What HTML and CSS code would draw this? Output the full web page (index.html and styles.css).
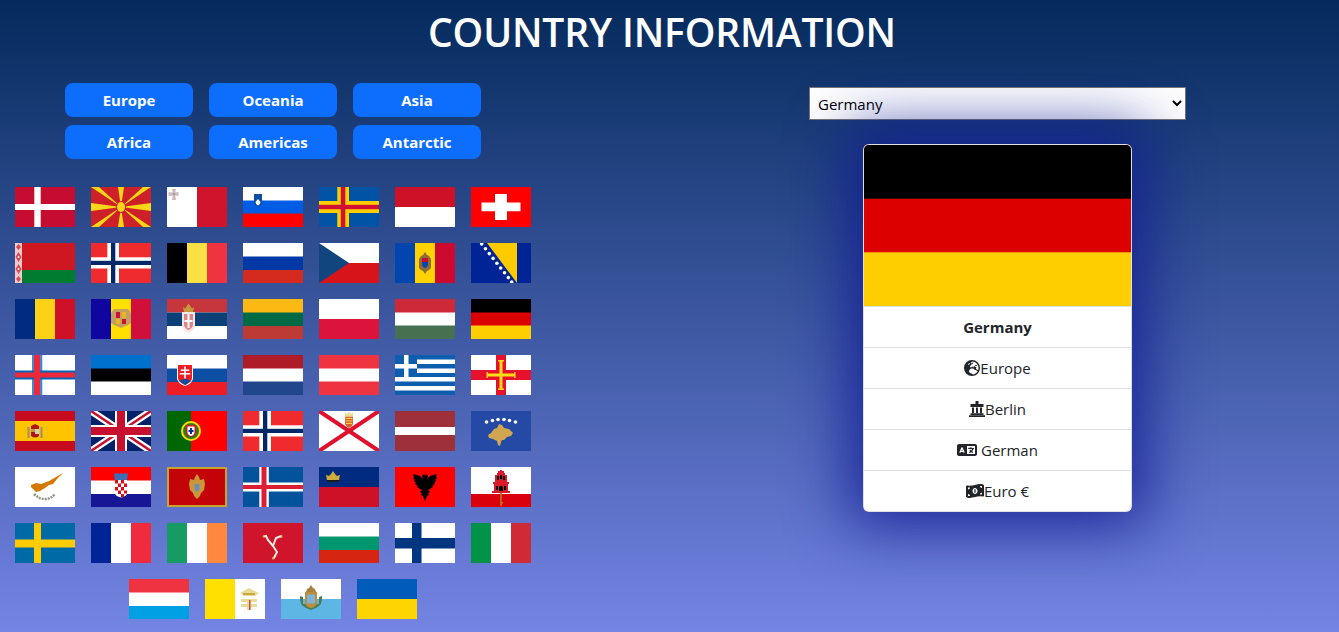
FILE: index.html
```html
<!DOCTYPE html>
<html lang="en">
<head>
    <meta charset="UTF-8">
    <meta name="viewport" content="width=device-width, initial-scale=1.0">
    <title>Country Information</title>
    <link rel="stylesheet" href="styles.css">
</head>
<body>
    <h1 class="title">COUNTRY INFORMATION</h1>
    <main class="layout">
        <section class="browse">
            <div class="regions">
                <button class="region-btn">Europe</button>
                <button class="region-btn">Oceania</button>
                <button class="region-btn">Asia</button>
                <button class="region-btn">Africa</button>
                <button class="region-btn">Americas</button>
                <button class="region-btn">Antarctic</button>
            </div>
            <div class="flags">
                <!-- row 1 -->
                <svg class="flag" viewBox="0 0 60 40"><title>Denmark</title><rect width="60" height="40" fill="#c60c30"/><rect x="19.3" width="6.4" height="40" fill="#fff"/><rect y="17" width="60" height="6" fill="#fff"/></svg>
                <svg class="flag" viewBox="0 0 60 40"><title>North Macedonia</title><rect width="60" height="40" fill="#ce2028"/><g fill="#f9d616"><path d="M0 0h8l22 20zM60 0h-8L30 20zM0 40h8l22-20zM60 40h-8L30 20zM27 0h6l-3 20zM27 40h6l-3-20zM0 16v8l30-4zM60 16v8l-30-4z"/></g><ellipse cx="30" cy="20" rx="5" ry="6" fill="#ce2028"/><ellipse cx="30" cy="20" rx="4" ry="5" fill="#f9d616"/></svg>
                <svg class="flag" viewBox="0 0 60 40"><title>Malta</title><rect width="60" height="40" fill="#cf142b"/><rect width="30" height="40" fill="#fff"/><path d="M5 2h4l-.8 3.500L11.500 5v4l-3.300-.5L9 13H5l.8-4.500L1.500 9V5l4.300.5z" fill="#cdb9bb"/><rect x="6" y="6" width="2" height="2" fill="#999"/></svg>
                <svg class="flag" viewBox="0 0 60 40"><title>Slovenia</title><rect width="60" height="40" fill="#f00"/><rect width="60" height="26.500" fill="#005ce5"/><rect width="60" height="13.500" fill="#fff"/><path d="M11 7h8v8q0 3-4 5q-4-2-4-5z" fill="#0b4ea2"/><path d="M12.500 15l2.500-3 2.500 3q0 2-2.500 3.500q-2.500-1.500-2.500-3.500z" fill="#fff"/></svg>
                <svg class="flag" viewBox="0 0 60 40"><title>Aland</title><rect width="60" height="40" fill="#0053a5"/><rect x="18.300" width="11.700" height="40" fill="#ffce00"/><rect y="14" width="60" height="12" fill="#ffce00"/><rect x="21.800" width="4.500" height="40" fill="#d21034"/><rect y="17.800" width="60" height="4.400" fill="#d21034"/></svg>
                <svg class="flag" viewBox="0 0 60 40"><title>Monaco</title><rect width="60" height="40" fill="#fff"/><rect width="60" height="20" fill="#ce1126"/></svg>
                <svg class="flag" viewBox="0 0 60 40"><title>Switzerland</title><rect width="60" height="40" fill="#f00"/><path d="M24 7h12v8.500h13.500v8.800H36V33H24v-8.700H10.500v-8.800H24z" fill="#fff"/></svg>

                <!-- row 2 -->
                <svg class="flag" viewBox="0 0 60 40"><title>Belarus</title><rect width="60" height="27" fill="#ce1720"/><rect y="27" width="60" height="13" fill="#007c30"/><rect width="7" height="40" fill="#f3c9cc"/><path d="M3.500 1L6 4 3.500 7 1 4zM3.500 9L6.500 14 3.500 19 .5 14zM3.500 21L6.500 26 3.500 31 .5 26zM3.500 33L6 36 3.500 39 1 36z" fill="#d64a52"/><circle cx="3.500" cy="14" r="1" fill="#fff"/><circle cx="3.500" cy="26" r="1" fill="#fff"/></svg>
                <svg class="flag" viewBox="0 0 60 40"><title>Norway</title><rect width="60" height="40" fill="#ef2b2d"/><rect x="16.300" width="11.700" height="40" fill="#fff"/><rect y="14.300" width="60" height="11.200" fill="#fff"/><rect x="20" width="4.300" height="40" fill="#002868"/><rect y="17.800" width="60" height="4.200" fill="#002868"/></svg>
                <svg class="flag" viewBox="0 0 60 40"><title>Belgium</title><rect width="60" height="40" fill="#ef3340"/><rect width="40" height="40" fill="#fae042"/><rect width="20" height="40"/></svg>
                <svg class="flag" viewBox="0 0 60 40"><title>Russia</title><rect width="60" height="40" fill="#d52b1e"/><rect width="60" height="27" fill="#0039a6"/><rect width="60" height="13.500" fill="#fff"/></svg>
                <svg class="flag" viewBox="0 0 60 40"><title>Czechia</title><rect width="60" height="40" fill="#fff"/><rect y="20" width="60" height="20" fill="#d7141a"/><path d="M0 0l30 20L0 40z" fill="#11457e"/></svg>
                <svg class="flag" viewBox="0 0 60 40"><title>Moldova</title><rect width="60" height="40" fill="#cc092f"/><rect width="40" height="40" fill="#ffd200"/><rect width="20" height="40" fill="#0046ae"/><path d="M30 9l2 3 2 1 2 3v9l-2 2-2 1-2 3-2-3-2-1-2-2v-9l2-3 2-1z" fill="#8a6d3b"/><rect x="27" y="15" width="6" height="4" fill="#cc092f"/><path d="M27 19h6v3q-1 3-3 3t-3-3z" fill="#0046ae"/></svg>
                <svg class="flag" viewBox="0 0 60 40"><title>Bosnia and Herzegovina</title><rect width="60" height="40" fill="#002395"/><path d="M16 0h30v40z" fill="#fecb00"/><g fill="#fff"><circle cx="10.700" cy="1" r="1.800"/><circle cx="14.500" cy="5.800" r="1.800"/><circle cx="18.300" cy="10.600" r="1.800"/><circle cx="22.100" cy="15.400" r="1.800"/><circle cx="25.900" cy="20.200" r="1.800"/><circle cx="29.700" cy="25" r="1.800"/><circle cx="33.500" cy="29.800" r="1.800"/><circle cx="37.300" cy="34.600" r="1.800"/><circle cx="40.700" cy="39" r="1.800"/></g></svg>

                <!-- row 3 -->
                <svg class="flag" viewBox="0 0 60 40"><title>Romania</title><rect width="60" height="40" fill="#ce1126"/><rect width="40" height="40" fill="#fcd116"/><rect width="20" height="40" fill="#002b7f"/></svg>
                <svg class="flag" viewBox="0 0 60 40"><title>Andorra</title><rect width="60" height="40" fill="#d0103a"/><rect width="40" height="40" fill="#fedf00"/><rect width="20" height="40" fill="#10069f"/><path d="M23 10h14l3 4v10l-3 2-7 3-7-3-3-2V14z" fill="#c4a060"/><rect x="25" y="13" width="4" height="6" fill="#d0103a"/><rect x="31" y="13" width="4" height="6" fill="#e8b820"/><rect x="25" y="20" width="4" height="5" fill="#e8b820"/><rect x="31" y="20" width="4" height="5" fill="#d0103a"/></svg>
                <svg class="flag" viewBox="0 0 60 40"><title>Serbia</title><rect width="60" height="40" fill="#fff"/><rect width="60" height="13.500" fill="#c6363c"/><rect y="13.500" width="60" height="13.500" fill="#0c4076"/><path d="M15 13h13v13q0 5-6.500 8q-6.500-3-6.500-8z" fill="#f2e6e6"/><path d="M17 15h9v10q0 4-4.500 6q-4.500-2-4.500-6z" fill="#c6363c" opacity=".55"/><path d="M20.500 15h2v6h3v2h-3v6h-2v-6h-3v-2h3z" fill="#fff"/><path d="M16 8l2 1.500 3.500-5 3.500 5 2-1.500-1 5H17z" fill="#c7983a"/></svg>
                <svg class="flag" viewBox="0 0 60 40"><title>Lithuania</title><rect width="60" height="40" fill="#be3a34"/><rect width="60" height="27" fill="#006a44"/><rect width="60" height="13.500" fill="#fdb913"/></svg>
                <svg class="flag" viewBox="0 0 60 40"><title>Poland</title><rect width="60" height="40" fill="#dc143c"/><rect width="60" height="20" fill="#fff"/></svg>
                <svg class="flag" viewBox="0 0 60 40"><title>Hungary</title><rect width="60" height="40" fill="#477050"/><rect width="60" height="26.500" fill="#fff"/><rect width="60" height="13.500" fill="#ce2939"/></svg>
                <svg class="flag" viewBox="0 0 60 40"><title>Germany</title><rect width="60" height="40" fill="#ffce00"/><rect width="60" height="26.500" fill="#d00"/><rect width="60" height="13.500"/></svg>

                <!-- row 4 -->
                <svg class="flag" viewBox="0 0 60 40"><title>Faroe Islands</title><rect width="60" height="40" fill="#fff"/><rect x="17" width="10.300" height="40" fill="#3f8ad0"/><rect y="15.500" width="60" height="9" fill="#0065bd"/><rect x="19" width="6" height="40" fill="#ed2939"/><rect y="17.500" width="60" height="5" fill="#ed2939"/></svg>
                <svg class="flag" viewBox="0 0 60 40"><title>Estonia</title><rect width="60" height="40" fill="#fff"/><rect width="60" height="26.500"/><rect width="60" height="13.500" fill="#0072ce"/></svg>
                <svg class="flag" viewBox="0 0 60 40"><title>Slovakia</title><rect width="60" height="40" fill="#ee1c25"/><rect width="60" height="27" fill="#0b4ea2"/><rect width="60" height="13.500" fill="#fff"/><path d="M10 9h16v14q0 5-8 8q-8-3-8-8z" fill="#fff"/><path d="M11 10h14v13q0 4-7 7q-7-3-7-7z" fill="#ee1c25"/><path d="M17.200 11.500h1.600v3h3.500v1.500h-3.500v2h4.500v1.500h-4.500v4h-1.600v-4h-4.500V18h4.500v-2h-3.500v-1.500h3.500z" fill="#fff"/><path d="M12.500 26q5.500-4 11 0q-2.500 2.500-5.500 4q-3-1.500-5.500-4z" fill="#0b4ea2"/></svg>
                <svg class="flag" viewBox="0 0 60 40"><title>Netherlands</title><rect width="60" height="40" fill="#21468b"/><rect width="60" height="26.500" fill="#fff"/><rect width="60" height="13.500" fill="#ae1c28"/></svg>
                <svg class="flag" viewBox="0 0 60 40"><title>Austria</title><rect width="60" height="40" fill="#ef3340"/><rect y="13.500" width="60" height="13" fill="#fff"/></svg>
                <svg class="flag" viewBox="0 0 60 40"><title>Greece</title><rect width="60" height="40" fill="#0d5eaf"/><g fill="#fff"><rect y="4.500" width="60" height="4.500"/><rect y="13.500" width="60" height="4.500"/><rect y="22" width="60" height="4.500"/><rect y="31" width="60" height="4.500"/></g><rect width="22" height="22" fill="#0d5eaf"/><rect x="9" width="4.500" height="22" fill="#fff"/><rect y="9" width="22" height="4.500" fill="#fff"/></svg>
                <svg class="flag" viewBox="0 0 60 40"><title>Guernsey</title><rect width="60" height="40" fill="#fff"/><rect x="25" width="10" height="40" fill="#e8112d"/><rect y="15" width="60" height="10" fill="#e8112d"/><path d="M27 5h6v1.500h-1.500v12H43V17h1.500v6H43v-1.500H31.500v12H33V35h-6v-1.500h1.500v-12H17V23h-1.500v-6H17v1.500h11.500v-12H27z" fill="#f9dd16"/></svg>

                <!-- row 5 -->
                <svg class="flag" viewBox="0 0 60 40"><title>Spain</title><rect width="60" height="40" fill="#c60b1e"/><rect y="10" width="60" height="20" fill="#ffc400"/><path d="M16 15l4-2 4 2v10q-4 3-8 0z" fill="#ad1519"/><rect x="20" y="18" width="4" height="5" fill="#d3cfc5"/><rect x="16" y="18" width="4" height="3" fill="#c8973c"/><rect x="12.500" y="16" width="2" height="11" fill="#a68a6d"/><rect x="25.500" y="16" width="2" height="11" fill="#a68a6d"/></svg>
                <svg class="flag" viewBox="0 0 60 40"><title>United Kingdom</title><rect width="60" height="40" fill="#012169"/><path d="M0 0l60 40M60 0L0 40" stroke="#fff" stroke-width="7"/><path d="M0 0l60 40M60 0L0 40" stroke="#c8102e" stroke-width="2.500"/><rect x="24" width="12" height="40" fill="#fff"/><rect y="14" width="60" height="12" fill="#fff"/><rect x="26" width="8" height="40" fill="#c8102e"/><rect y="16" width="60" height="8" fill="#c8102e"/></svg>
                <svg class="flag" viewBox="0 0 60 40"><title>Portugal</title><rect width="60" height="40" fill="#f00"/><rect width="24" height="40" fill="#060"/><circle cx="24" cy="20" r="9" fill="#2f7a1e" stroke="#ffe000" stroke-width="2"/><path d="M19 14h10v7q0 4-5 5q-5-1-5-5z" fill="#d01c1f"/><path d="M20.500 15.500h7v5.500q0 3-3.500 4q-3.500-1-3.500-4z" fill="#fff"/><rect x="23" y="17" width="2" height="6" fill="#039"/><rect x="21.500" y="19" width="5" height="2" fill="#039"/></svg>
                <svg class="flag" viewBox="0 0 60 40"><title>Svalbard and Jan Mayen</title><rect width="60" height="40" fill="#ef2b2d"/><rect x="16.300" width="11.700" height="40" fill="#fff"/><rect y="14.300" width="60" height="11.200" fill="#fff"/><rect x="20" width="4.300" height="40" fill="#002868"/><rect y="17.800" width="60" height="4.200" fill="#002868"/></svg>
                <svg class="flag" viewBox="0 0 60 40"><title>Jersey</title><rect width="60" height="40" fill="#fff"/><path d="M0 0l60 40M60 0L0 40" stroke="#df112d" stroke-width="4"/><path d="M26 5.500h8v6.500q0 3-4 5q-4-2-4-5z" fill="#e0602c"/><path d="M26.500 7.500h7M26.500 10h7M27 12.500h6" stroke="#f0d24c"/><path d="M26 1.500l2 1.500 2-2 2 2 2-1.500v4h-8z" fill="#f0d88c"/></svg>
                <svg class="flag" viewBox="0 0 60 40"><title>Latvia</title><rect width="60" height="40" fill="#9e3039"/><rect y="16" width="60" height="8" fill="#fff"/></svg>
                <svg class="flag" viewBox="0 0 60 40"><title>Kosovo</title><rect width="60" height="40" fill="#244aa5"/><path d="M28 13l3 1 2 3 5 1 4 4-2 3-4 1-3 3-2 0-1 2-1 4-2-1-1-4-4-2-4-1-1-3 3-2 3-4 3-1z" fill="#d0a650"/><g fill="#fff"><circle cx="15.500" cy="11" r="1.800"/><circle cx="21.500" cy="9.500" r="1.800"/><circle cx="27" cy="8.500" r="1.800"/><circle cx="33" cy="8.500" r="1.800"/><circle cx="38.500" cy="9.500" r="1.800"/><circle cx="44.500" cy="11" r="1.800"/></g></svg>

                <!-- row 6 -->
                <svg class="flag" viewBox="0 0 60 40"><title>Cyprus</title><rect width="60" height="40" fill="#fff"/><path d="M16 18l5-2 5 1 8-3 7-4 7-4-6 6-4 5-4 1-4 3-5 3-4 1-3-3-2-2z" fill="#d57800"/><path d="M19 27q5 5 11 5 6 0 10-5" fill="none" stroke="#8b9a80" stroke-width="2.500" stroke-dasharray="2 1"/></svg>
                <svg class="flag" viewBox="0 0 60 40"><title>Croatia</title><rect width="60" height="40" fill="#fff"/><rect width="60" height="13.500" fill="#f00"/><rect y="27" width="60" height="13" fill="#171796"/><path d="M23 7l3-1 2 1 2-1 2 1 2-1 3 1-1 6H24z" fill="#3b6fb5"/><path d="M24 13h12v13q0 3-6 4.500q-6-1.500-6-4.500z" fill="#fff"/><g fill="#e30a17"><rect x="24" y="13" width="3" height="3.500"/><rect x="30" y="13" width="3" height="3.500"/><rect x="27" y="16.500" width="3" height="3.500"/><rect x="33" y="16.500" width="3" height="3.500"/><rect x="24" y="20" width="3" height="3.500"/><rect x="30" y="20" width="3" height="3.500"/><rect x="27" y="23.500" width="3" height="3.500"/><rect x="33" y="23.500" width="3" height="3"/><rect x="30" y="27" width="3" height="3"/></g></svg>
                <svg class="flag" viewBox="0 0 60 40"><title>Montenegro</title><rect width="60" height="40" fill="#c8a42c"/><rect x="2" y="2" width="56" height="36" fill="#c40308"/><path d="M30 7l2 3 1 3 4-1 1 5-1 6-3 3-1 3-3 3-3-3-1-3-3-3-1-6 1-5 4 1 1-3z" fill="#c9963a"/><path d="M27.500 17h5v5q-1 3-2.500 3t-2.500-3z" fill="#6e8fb3"/></svg>
                <svg class="flag" viewBox="0 0 60 40"><title>Iceland</title><rect width="60" height="40" fill="#02529c"/><rect x="16.300" width="9.500" height="40" fill="#fff"/><rect y="15.500" width="60" height="9" fill="#fff"/><rect x="18.500" width="5" height="40" fill="#dc1e35"/><rect y="18" width="60" height="4" fill="#dc1e35"/></svg>
                <svg class="flag" viewBox="0 0 60 40"><title>Liechtenstein</title><rect width="60" height="40" fill="#ce1126"/><rect width="60" height="20" fill="#002b7f"/><path d="M8 13l-1-5 3 1 2-2 2-3 2 3 2 2 3-1-1 5z" fill="#d1ad3b"/><rect x="8" y="13" width="12" height="2" fill="#1b1b1b"/></svg>
                <svg class="flag" viewBox="0 0 60 40"><title>Albania</title><rect width="60" height="40" fill="#f00"/><path d="M27 9l2-2 1 2 1-2 2 2-1 3 3-3 7-2-1 3 1 1-2 2 1 1-2 2 1 1-3 2 1 1-3 2-2 1 2 2-2 1 1 2-2 1-1 3-1 2-1-2-1-3-2-1 1-2-2-1 2-2-2-1-3-2 1-1-3-2 1-1-2-2 1-1-2-2 1-1-1-3 7 2 3 3z"/></svg>
                <svg class="flag" viewBox="0 0 60 40"><title>Gibraltar</title><rect width="60" height="40" fill="#fff"/><rect y="27" width="60" height="13" fill="#da000c"/><path d="M24 8h2V6h1V4h2V3h2v1h2v2h1v2h2v7h2v2h-1v7h2v2H21v-2h2v-7h-1v-2h2z" fill="#da1a2a"/><rect x="26" y="9" width="2" height="4"/><rect x="32" y="9" width="2" height="4"/><rect x="29" y="8" width="2" height="4"/><rect x="25" y="19" width="2" height="4"/><rect x="33" y="19" width="2" height="4"/><path d="M28 24v-4l2-1.500 2 1.500v4z"/><path d="M29.200 26h1.600v9h1.200v1.500h-1.200V39h-1.600z" fill="#b37a1e"/></svg>

                <!-- row 7 -->
                <svg class="flag" viewBox="0 0 60 40"><title>Sweden</title><rect width="60" height="40" fill="#006aa7"/><rect x="19" width="7" height="40" fill="#fecc00"/><rect y="16.500" width="60" height="8" fill="#fecc00"/></svg>
                <svg class="flag" viewBox="0 0 60 40"><title>France</title><rect width="60" height="40" fill="#ef2b3d"/><rect width="40" height="40" fill="#fff"/><rect width="20" height="40" fill="#002395"/></svg>
                <svg class="flag" viewBox="0 0 60 40"><title>Ireland</title><rect width="60" height="40" fill="#ff883e"/><rect width="40" height="40" fill="#fff"/><rect width="20" height="40" fill="#169b62"/></svg>
                <svg class="flag" viewBox="0 0 60 40"><title>Isle of Man</title><rect width="60" height="40" fill="#cf142b"/><path d="M30 23l-5-6-2-4-2.500 .5M30 23l3-8 5-2 .5 1.500M30 23l4 6-3 6 -1.500 .5" fill="none" stroke="#f4eee0" stroke-width="2"/><circle cx="20.500" cy="13.500" r="1" fill="#d9b44a"/><circle cx="38.500" cy="13" r="1" fill="#d9b44a"/><circle cx="30.500" cy="35.500" r="1" fill="#d9b44a"/></svg>
                <svg class="flag" viewBox="0 0 60 40"><title>Bulgaria</title><rect width="60" height="40" fill="#d62612"/><rect width="60" height="27" fill="#00966e"/><rect width="60" height="13.500" fill="#fff"/></svg>
                <svg class="flag" viewBox="0 0 60 40"><title>Finland</title><rect width="60" height="40" fill="#fff"/><rect x="17" width="9.500" height="40" fill="#003580"/><rect y="15" width="60" height="10.500" fill="#003580"/></svg>
                <svg class="flag" viewBox="0 0 60 40"><title>Italy</title><rect width="60" height="40" fill="#ce2b37"/><rect width="40" height="40" fill="#fff"/><rect width="20" height="40" fill="#009246"/></svg>

                <!-- row 8 -->
                <svg class="flag" viewBox="0 0 60 40"><title>Luxembourg</title><rect width="60" height="40" fill="#00a1e4"/><rect width="60" height="27" fill="#fff"/><rect width="60" height="13.500" fill="#ef3340"/></svg>
                <svg class="flag" viewBox="0 0 60 40"><title>Vatican City</title><rect width="60" height="40" fill="#fff"/><rect width="30" height="40" fill="#ffe000"/><path d="M35 14l9-5 10 5-4 3H39zM36 20h16v3h-6v2h6v3h-6v3h-4v-3h-6v-3h6v-2h-6z" fill="#e8dc9a"/><path d="M38 14h12v2H38z" fill="#c9a93c"/><rect x="44" y="21" width="1.500" height="10" fill="#d24b3a"/></svg>
                <svg class="flag" viewBox="0 0 60 40"><title>San Marino</title><rect width="60" height="40" fill="#fff"/><rect y="20" width="60" height="20" fill="#5eb6e4"/><path d="M19 17q-1 9 6 12l5 2 5-2q7-3 6-12l-3 1v7h-16v-7z" fill="#4a7e5c"/><path d="M24 13h12v12q-3 4-6 4t-6-4z" fill="#b98f3b"/><rect x="26" y="15.500" width="8" height="9" fill="#7fb4d8"/><path d="M25 13l1-3 2-1 2-3 2 3 2 1 1 3z" fill="#a9833c"/></svg>
                <svg class="flag" viewBox="0 0 60 40"><title>Ukraine</title><rect width="60" height="40" fill="#ffd500"/><rect width="60" height="20" fill="#005bbb"/></svg>
            </div>
        </section>

        <section class="details">
            <select class="country-select">
                <option>Germany</option>
            </select>
            <div class="card">
                <svg class="card-flag" viewBox="0 0 268 161" preserveAspectRatio="none"><rect width="268" height="161" fill="#ffce00"/><rect width="268" height="107.300" fill="#d00"/><rect width="268" height="53.700"/></svg>
                <ul class="info-list">
                    <li class="info-item info-name">Germany</li>
                    <li class="info-item">
                        <svg class="icon" viewBox="0 0 512 512"><path d="M266.3 48.3L232.5 73.6c-5.4 4-8.5 10.4-8.5 17.1v9.1c0 6.8 5.5 12.3 12.3 12.3c2.4 0 4.8-.7 6.8-2.1l41.8-27.9c2-1.3 4.4-2.1 6.8-2.1h1c6.2 0 11.3 5.1 11.3 11.3c0 3-1.2 5.9-3.3 8l-19.9 19.9c-5.8 5.8-12.9 10.2-20.7 12.8l-26.5 8.8c-5.8 1.9-9.6 7.3-9.6 13.4c0 3.7-1.5 7.3-4.1 10l-17.9 17.9c-6.4 6.4-9.9 15-9.9 24v4.3c0 16.4 13.6 29.7 29.9 29.7c11 0 21.2-6.2 26.1-16.1l4-8.1c2.4-4.8 7.4-7.9 12.8-7.9c4.5 0 8.7 2.1 11.4 5.7l16.3 21.7c2.1 2.9 5.5 4.5 9.1 4.5c8.4 0 13.9-8.9 10.1-16.4l-1.1-2.3c-3.5-7 0-15.5 7.5-18l21.2-7.1c7.6-2.5 12.7-9.6 12.7-17.6c0-10.2 8.2-18.4 18.4-18.4H400c8.8 0 16 7.2 16 16s-7.2 16-16 16H379.3c-7.2 0-14.2 2.9-19.3 8l-4.7 4.7c-2.1 2.1-3.3 5-3.3 8c0 6.2 5.1 11.3 11.3 11.3h11.3c6 0 11.8 2.4 16 6.6l6.5 6.5c1.8 1.8 2.8 4.3 2.8 6.8s-1 5-2.8 6.8l-7.5 7.5C386 262 384 266.9 384 272s2 10 5.7 13.7L408 304c10.2 10.2 24.1 16 38.6 16H454c6.5-20.2 10-41.7 10-64c0-111.4-87.6-202.4-197.7-207.7zm172 307.9c-3.7-2.6-8.2-4.1-13-4.1c-6 0-11.8-2.4-16-6.6L396 332c-7.7-7.7-18-12-28.9-12c-9.7 0-19.2-3.5-26.6-9.8L314 287.4c-11.6-9.9-26.4-15.4-41.7-15.4H251.4c-12.6 0-25 3.7-35.5 10.7L188.5 301c-17.8 11.9-28.5 31.9-28.5 53.3v3.2c0 17 6.7 33.3 18.7 45.3l16 16c8.5 8.5 20 13.3 32 13.3H248c13.3 0 24 10.7 24 24c0 2.5 .4 5 1.1 7.3c71.3-5.8 132.5-47.6 165.2-107.2zM0 256a256 256 0 1 1 512 0A256 256 0 1 1 0 256zM187.3 100.7c-6.2-6.2-16.4-6.2-22.6 0l-32 32c-6.2 6.2-6.2 16.4 0 22.6s16.4 6.2 22.6 0l32-32c6.2-6.2 6.2-16.4 0-22.6z"/></svg>Europe
                    </li>
                    <li class="info-item">
                        <svg class="icon" viewBox="0 0 16 16"><path d="M6.500 0h3v3h5v3h-13V3h5zM3 6.500h2V12H3zM7 6.500h2V12H7zM11 6.500h2V12h-2zM1.500 12.300h13V14h-13zM0 14.300h16V16H0z"/></svg>Berlin
                    </li>
                    <li class="info-item">
                        <svg class="icon icon-wide" viewBox="0 0 640 512"><path d="M0 128C0 92.7 28.7 64 64 64H256h48 16H576c35.3 0 64 28.7 64 64V384c0 35.3-28.7 64-64 64H320 304 256 64c-35.3 0-64-28.7-64-64V128zm320 0V384H576V128H320zM178.3 175.9c-3.2-7.2-10.4-11.9-18.3-11.9s-15.1 4.7-18.3 11.9l-64 144c-4.5 10.1 .1 21.9 10.2 26.4s21.9-.1 26.4-10.2l8.9-20.1h73.6l8.9 20.1c4.5 10.1 16.3 14.6 26.4 10.2s14.6-16.3 10.2-26.4l-64-144zM160 233.2L179 276H141l19-42.8zM448 164c11 0 20 9 20 20v4h44 16c11 0 20 9 20 20s-9 20-20 20h-2l-1.6 4.5c-8.9 24.4-22.4 46.6-39.6 65.4c.9 .6 1.8 1.1 2.7 1.6l18.9 11.3c9.5 5.7 12.5 18 6.9 27.4s-18 12.5-27.4 6.9l-18.9-11.3c-4.5-2.7-8.8-5.5-13.1-8.5c-10.6 7.5-21.9 14-34 19.4l-3.6 1.6c-10.1 4.5-21.9-.1-26.4-10.2s.1-21.9 10.2-26.4l3.6-1.6c6.4-2.9 12.6-6.1 18.5-9.8l-12.2-12.2c-7.8-7.8-7.8-20.5 0-28.3s20.5-7.8 28.3 0l14.6 14.6 .5 .5c12.4-13.1 22.5-28.3 29.8-45H448 376c-11 0-20-9-20-20s9-20 20-20h52v-4c0-11 9-20 20-20z"/></svg> German
                    </li>
                    <li class="info-item">
                        <svg class="icon icon-bill" viewBox="0 0 576 512"><path d="M0 112.5V422.3c0 18 10.1 35 27 41.3c87 32.5 174 10.3 261-11.9c79.8-20.3 159.6-40.7 239.3-18.9c23 6.3 48.7-9.5 48.7-33.4V89.7c0-18-10.1-35-27-41.3C462 15.9 375 38.1 288 60.3C208.2 80.6 128.4 100.9 48.7 79.1C25.6 72.8 0 88.6 0 112.5zM288 352c-44.2 0-80-43-80-96s35.8-96 80-96s80 43 80 96s-35.8 96-80 96zM64 352c35.3 0 64 28.7 64 64H64V352zm64-208c0 35.3-28.7 64-64 64V144h64zM512 304v64H448c0-35.3 28.7-64 64-64zM448 96h64v64c-35.3 0-64-28.7-64-64z"/><rect x="268" y="200" width="40" height="112"/></svg>Euro €
                    </li>
                </ul>
            </div>
        </section>
    </main>
</body>
</html>
```

FILE: styles.css
```css
* {
    box-sizing: border-box;
}

body {
    margin: 0;
    height: 632px;
    overflow: hidden;
    font-family: "Open Sans", "Noto Sans", sans-serif;
    font-size: 15px;
    line-height: 24px;
    color: #212529;
    background: linear-gradient(to bottom, #042a5c, #7484e4);
}

.title {
    margin: 0;
    padding: 8px 15px 0 0;
    height: 83px;
    text-align: center;
    font-size: 39px;
    line-height: 48px;
    font-weight: 600;
    letter-spacing: -0.15px;
    color: #fff;
}

.layout {
    display: flex;
    align-items: flex-start;
}

.browse {
    width: 546px;
    flex: none;
}

.regions {
    display: grid;
    grid-template-columns: repeat(3, 128px);
    justify-content: center;
    gap: 8px 16px;
    margin-bottom: 28px;
}

.region-btn {
    height: 34px;
    padding: 0;
    border: none;
    border-radius: 8px;
    background-color: #0d6efd;
    color: #fff;
    font-family: inherit;
    font-size: 15px;
    font-weight: 700;
}

.flags {
    display: flex;
    flex-wrap: wrap;
    justify-content: center;
    gap: 16px;
}

.flag {
    display: block;
    width: 60px;
    height: 40px;
}

.details {
    flex: 1;
    margin-left: 110px;
    display: flex;
    flex-direction: column;
    align-items: center;
    padding-top: 4px;
}

.country-select {
    display: block;
    width: 377px;
    height: 33px;
    padding: 0 4px;
    border: 1px solid #767676;
    border-radius: 0;
    background-color: #fff;
    color: #000;
    font-family: inherit;
    font-size: 15px;
}

.card {
    width: 269px;
    margin-top: 24px;
    background: #fff;
    border: 1px solid rgba(0, 0, 0, 0.125);
    border-radius: 6px;
    overflow: hidden;
    box-shadow: 0 0 60px 15px rgba(15, 25, 145, 0.8);
}

.card-flag {
    display: block;
    width: 100%;
    height: 161px;
}

.info-list {
    list-style: none;
    margin: 0;
    padding: 0;
}

.info-item {
    height: 41px;
    padding: 8px 16px;
    text-align: center;
    border-top: 1px solid #dee2e6;
}

.info-name {
    font-weight: 700;
}

.icon {
    width: 16px;
    height: 16px;
    vertical-align: -2px;
    fill: #212529;
}

.icon-wide {
    width: 20px;
}

.icon-bill {
    width: 18px;
}
```
